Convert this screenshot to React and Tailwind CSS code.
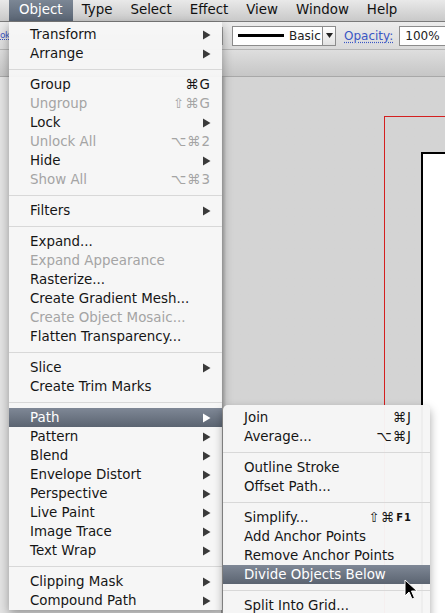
import React from "react";

const mainItems = [
  { label: "Transform", sub: true },
  { label: "Arrange", sub: true },
  { sep: true },
  { label: "Group", key: "⌘G" },
  { label: "Ungroup", key: "⇧⌘G", off: true },
  { label: "Lock", sub: true },
  { label: "Unlock All", key: "⌥⌘2", off: true },
  { label: "Hide", sub: true },
  { label: "Show All", key: "⌥⌘3", off: true },
  { sep: true },
  { label: "Filters", sub: true },
  { sep: true },
  { label: "Expand..." },
  { label: "Expand Appearance", off: true },
  { label: "Rasterize..." },
  { label: "Create Gradient Mesh..." },
  { label: "Create Object Mosaic...", off: true },
  { label: "Flatten Transparency..." },
  { sep: true },
  { label: "Slice", sub: true },
  { label: "Create Trim Marks" },
  { sep: true },
  { label: "Path", sub: true, active: true },
  { label: "Pattern", sub: true },
  { label: "Blend", sub: true },
  { label: "Envelope Distort", sub: true },
  { label: "Perspective", sub: true },
  { label: "Live Paint", sub: true },
  { label: "Image Trace", sub: true },
  { label: "Text Wrap", sub: true },
  { sep: true },
  { label: "Clipping Mask", sub: true },
  { label: "Compound Path", sub: true },
];

const pathItems = [
  { label: "Join", key: "⌘J" },
  { label: "Average...", key: "⌥⌘J" },
  { sep: true },
  { label: "Outline Stroke" },
  { label: "Offset Path..." },
  { sep: true },
  { label: "Simplify...", key: "⇧⌘", fkey: "F1" },
  { label: "Add Anchor Points" },
  { label: "Remove Anchor Points" },
  { label: "Divide Objects Below", active: true },
  { sep: true },
  { label: "Split Into Grid..." },
];

const menuBar = ["Object", "Type", "Select", "Effect", "View", "Window", "Help"];

function Arrow({ white }) {
  return (
    <svg width="9" height="10" viewBox="0 0 9 10">
      <path d="M1 0.5 L8.5 5 L1 9.5 Z" fill={white ? "#ffffff" : "#3a3a3a"} />
    </svg>
  );
}

function MenuRows({ items, padR }) {
  return items.map((it, i) => {
    if (it.sep) {
      return (
        <div key={i} className="h-[12px] flex items-center">
          <div className="w-full h-px bg-[#d8d8d8]" />
        </div>
      );
    }
    const color = it.active
      ? "text-white bg-gradient-to-b from-[#7f8896] to-[#5b6471]"
      : it.off
      ? "text-[#a4a4a4]"
      : "text-[#151515]";
    return (
      <div
        key={i}
        className={`h-[19px] flex items-center justify-between pl-[21px] pt-px ${padR} ${color}`}
      >
        <span>{it.label}</span>
        {it.sub && <Arrow white={it.active} />}
        {it.key && (
          <span className="tracking-[1px] flex items-center">
            {it.key}
            {it.fkey && <span className="text-[10px] font-bold ml-[1px]">{it.fkey}</span>}
          </span>
        )}
      </div>
    );
  });
}

export default function App() {
  return (
    <div className="relative w-[445px] h-[613px] overflow-hidden bg-[#d4d4d4] font-['DejaVu_Sans',sans-serif] flex flex-col">
      {/* menu bar */}
      <div className="h-[22px] shrink-0 flex items-stretch bg-gradient-to-b from-[#e9e9e9] to-[#c9c9c9] border-b border-[#7a7a7a] text-[13.4px] text-[#111] pl-[9px]">
        {menuBar.map((m, i) => (
          <div
            key={m}
            className={`flex items-center ${
              i === 0
                ? "px-[10px] bg-gradient-to-b from-[#7c8795] to-[#5a6574] text-white"
                : "px-[9px]"
            }`}
          >
            {m}
          </div>
        ))}
      </div>

      {/* control bar */}
      <div className="h-[28px] shrink-0 flex items-center bg-gradient-to-b from-[#ececec] to-[#dadada] border-b border-[#b5b5b5] text-[12px]">
        <span className="w-[9px] text-[9px] tracking-[-0.5px] text-[#3b57c4] underline decoration-dotted whitespace-nowrap">
          ok
        </span>
        <div className="ml-[213px] w-px h-[18px] bg-[#9a9a9a]" />
        <div className="ml-[9px] flex items-center h-[20px] border border-[#8c8c8c] bg-white w-[91px]">
          <div className="ml-[5px] w-[46px] h-[3px] bg-black" />
          <span className="ml-[5px] text-[#222]">Basic</span>
        </div>
        <div className="h-[20px] w-[13px] border border-l-0 border-[#8c8c8c] bg-gradient-to-b from-white to-[#e2e2e2] flex items-center justify-center">
          <svg width="7" height="5" viewBox="0 0 7 5">
            <path d="M0 0 L7 0 L3.5 5 Z" fill="#222" />
          </svg>
        </div>
        <span className="ml-[8px] text-[#3b57c4] underline decoration-dotted underline-offset-2">
          Opacity:
        </span>
        <div className="ml-[6px] flex-1 h-[20px] border border-r-0 border-[#8c8c8c] bg-white flex items-center pl-[5px] text-[#222]">
          100%
        </div>
      </div>

      {/* tab strip */}
      <div className="h-[27px] shrink-0 bg-gradient-to-b from-[#dedede] to-[#c6c6c6] border-b border-[#a8a8a8]" />

      {/* work area */}
      <div className="flex-1 flex">
        <div className="w-[222px] bg-[#e4e4e4] border-r border-[#9f9f9f]" />
        <div className="flex-1 bg-[#d4d4d4] bg-gradient-to-r from-[#b0b0b0] via-[#d4d4d4] via-[2%] to-[#d4d4d4] pl-[162px] pt-[39px]">
          <div className="h-full border-l border-t border-[#d42020] pl-[36px] pt-[35px]">
            <div className="h-full bg-white border-l-2 border-t-2 border-black" />
          </div>
        </div>
      </div>

      {/* Object menu */}
      <div className="absolute left-[9px] top-[22px] w-[213px] pt-[3px] bg-[#f6f6f6]/[0.97] shadow-[0_4px_10px_rgba(0,0,0,0.35)] text-[13.4px] leading-none">
        <MenuRows items={mainItems} padR="pr-[11px]" />
      </div>

      {/* Path submenu */}
      <div className="absolute left-[223px] top-[405px] w-[207px] pt-[3px] pb-[6px] rounded-[5px] bg-[#f6f6f6]/[0.97] shadow-[0_4px_10px_rgba(0,0,0,0.35)] text-[13.4px] leading-none">
        <MenuRows items={pathItems} padR="pr-[18px]" />
      </div>

      {/* cursor */}
      <svg
        className="absolute left-[404px] top-[579px]"
        width="14"
        height="22"
        viewBox="0 0 14 22"
      >
        <path
          d="M1 1 L1 17 L5 13 L8 20 L10.5 19 L7.5 12 L13 12 Z"
          fill="#000"
          stroke="#fff"
          strokeWidth="1"
          strokeLinejoin="round"
        />
      </svg>
    </div>
  );
}
